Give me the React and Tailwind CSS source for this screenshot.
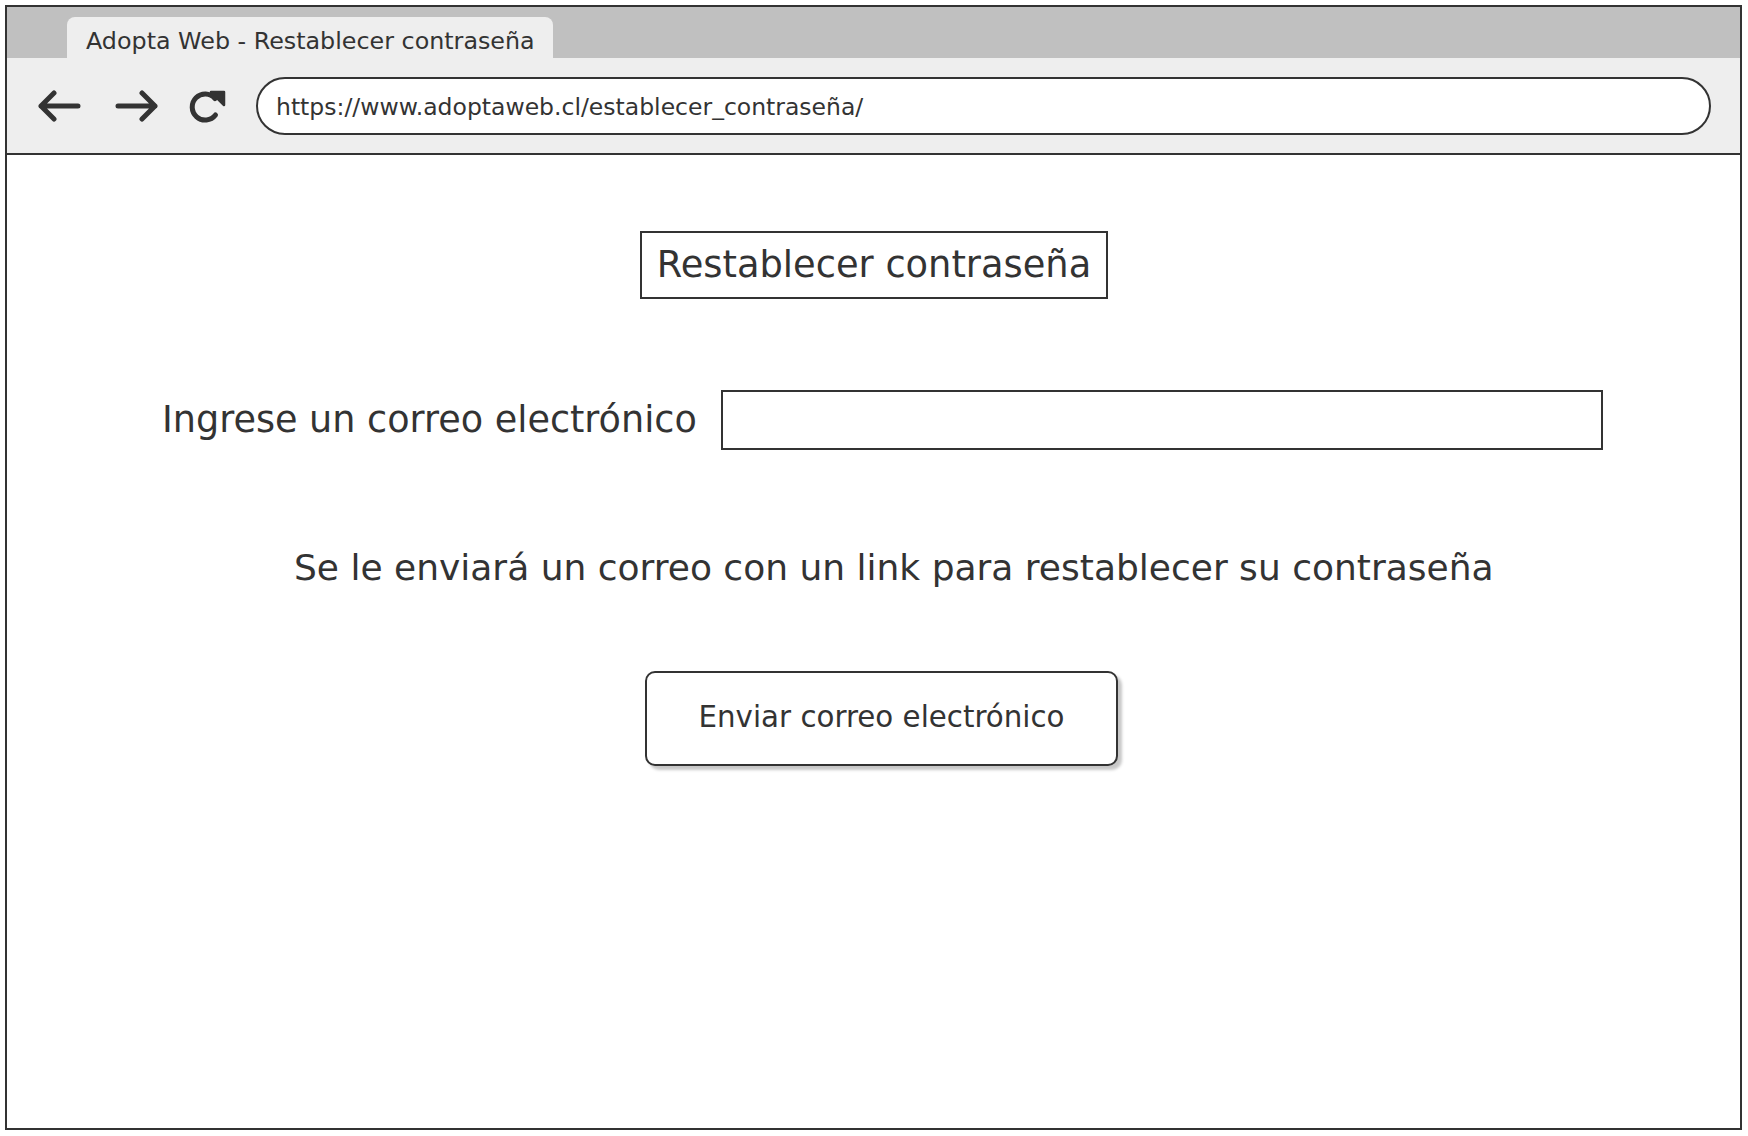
import React from "react";

const BackIcon = () => (
  <svg width="44" height="34" viewBox="0 0 44 34" fill="none">
    <path
      d="M40 17H3M16 4L3 17L16 30"
      stroke="#333"
      strokeWidth="5"
      strokeLinecap="round"
      strokeLinejoin="round"
    />
  </svg>
);

const ForwardIcon = () => (
  <svg width="44" height="34" viewBox="0 0 44 34" fill="none">
    <path
      d="M4 17H41M28 4L41 17L28 30"
      stroke="#333"
      strokeWidth="5"
      strokeLinecap="round"
      strokeLinejoin="round"
    />
  </svg>
);

const RefreshIcon = () => (
  <svg width="40" height="40" viewBox="0 0 40 40" fill="none">
    <path
      d="M29 12.5A13 13 0 1 0 29.5 29"
      stroke="#333"
      strokeWidth="5"
      strokeLinecap="round"
    />
    <path
      d="M25 6H38V19Z"
      fill="#333"
      stroke="#333"
      strokeWidth="2.5"
      strokeLinejoin="round"
    />
  </svg>
);

export default function App() {
  return (
    <div
      className="w-[1748px] h-[1136px] bg-white pt-[5px] pl-[5px] text-[#333]"
      style={{ fontFamily: '"DejaVu Sans", "Liberation Sans", sans-serif' }}
    >
      <div className="w-[1737px] h-[1125px] border-2 border-[#333] flex flex-col">
        {/* Tab strip */}
        <div className="h-[51px] bg-[#c0c0c0] pl-[60px] pt-[10px] flex items-end">
          <div className="w-[486px] h-[41px] bg-[#eeeeee] rounded-t-[8px] pl-[19px] pt-[8px] flex items-center text-[23.8px] whitespace-nowrap">
            Adopta Web - Restablecer contraseña
          </div>
        </div>

        {/* Toolbar */}
        <div className="h-[97px] bg-[#eeeeee] border-b-2 border-[#333] flex items-center pl-[31px] pr-[29px]">
          <BackIcon />
          <div className="ml-[32px]">
            <ForwardIcon />
          </div>
          <div className="ml-[28px]">
            <RefreshIcon />
          </div>
          <div className="ml-[30px] flex-1 h-[58px] rounded-full border-2 border-[#333] bg-white pl-[18px] pt-[4px] flex items-center text-[23.5px] whitespace-nowrap">
            https://www.adoptaweb.cl/establecer_contraseña/
          </div>
        </div>

        {/* Page */}
        <div className="flex-1 flex flex-col items-start bg-white">
          <div className="mt-[76px] ml-[633px] w-[468px] h-[68px] border-2 border-[#333] flex items-center justify-center text-[36.8px] whitespace-nowrap">
            Restablecer contraseña
          </div>

          <div className="mt-[91px] ml-[155px] flex items-center">
            <span className="w-[559px] text-[36.6px] whitespace-nowrap">
              Ingrese un correo electrónico
            </span>
            <div className="w-[882px] h-[60px] border-2 border-[#333] bg-white" />
          </div>

          <p className="mt-[96px] ml-[287px] text-[36px] leading-[44px] whitespace-nowrap">
            Se le enviará un correo con un link para restablecer su contraseña
          </p>

          <button className="mt-[81px] ml-[638px] w-[473px] h-[95px] border-2 border-[#333] rounded-[10px] bg-white shadow-[4px_4px_3px_rgba(0,0,0,0.22)] flex items-center justify-center pb-[2px] text-[29.3px] text-[#333] whitespace-nowrap">
            Enviar correo electrónico
          </button>
        </div>
      </div>
    </div>
  );
}
